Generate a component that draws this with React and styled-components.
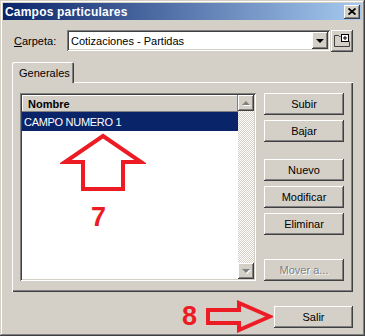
import React from "react";
import styled, { createGlobalStyle } from "styled-components";

const face = "#D4D0C8";
const font = `"Liberation Sans", Arial, sans-serif`;

const GlobalStyle = createGlobalStyle`
  html, body {
    margin: 0;
    padding: 0;
    background: ${face};
  }
  * {
    box-sizing: border-box;
  }
`;

const raised = `
  box-shadow: inset -1px -1px #404040, inset 1px 1px #ffffff,
    inset -2px -2px #808080, inset 2px 2px ${face};
`;

const sunken = `
  box-shadow: inset 1px 1px #808080, inset -1px -1px #ffffff,
    inset 2px 2px #404040, inset -2px -2px ${face};
`;

function App() {
  return (
    <>
      <GlobalStyle />
      <Window>
        <TitleBar>
          <Title>Campos particulares</Title>
          <CloseButton>
            <svg width="8" height="7" viewBox="0 0 8 7">
              <path d="M0.5 0.5 L7.5 6.5 M7.5 0.5 L0.5 6.5" stroke="#000" strokeWidth="1.8" />
            </svg>
          </CloseButton>
        </TitleBar>

        <Content>
          <FolderRow>
            <Label>
              <u>C</u>arpeta:
            </Label>
            <Combo>
              <ComboText>Cotizaciones - Partidas</ComboText>
              <DropButton>
                <DownTriangle />
              </DropButton>
            </Combo>
            <IconButton>
              <svg width="16" height="13" viewBox="0 0 16 13">
                <path d="M0.5 12.5 V1.5 H4.5 L5.5 2.5 H6.5" fill="none" stroke="#404040" />
                <path d="M0.5 12.5 H15.5 V7.5" fill="none" stroke="#404040" />
                <rect x="7.5" y="0.5" width="7" height="7" fill="#fff" stroke="#000" />
                <path d="M11 2 V6 M9 4 H13" stroke="#000" />
              </svg>
            </IconButton>
          </FolderRow>

          <TabStrip>
            <Tab>Generales</Tab>
          </TabStrip>

          <Panel>
            <ListBox>
              <ListMain>
                <Header>Nombre</Header>
                <Row selected>CAMPO NUMERO 1</Row>
              </ListMain>
              <ScrollBar>
                <ScrollButton>
                  <UpTriangle />
                </ScrollButton>
                <Track />
                <ScrollButton>
                  <DownGrayTriangle />
                </ScrollButton>
              </ScrollBar>

              <UpArrowMark width="86" height="62" viewBox="0 0 86 62">
                <polygon
                  points="43,4 81,30 63,30 63,57 23,57 23,30 5,30"
                  fill="none"
                  stroke="#ED1C24"
                  strokeWidth="4"
                />
              </UpArrowMark>
              <StepNumber>7</StepNumber>
            </ListBox>

            <ButtonColumn>
              <Button>Subir</Button>
              <Button>Bajar</Button>
              <Button gap={17}>Nuevo</Button>
              <Button>Modificar</Button>
              <Button>Eliminar</Button>
              <Button disabled last>
                Mover a...
              </Button>
            </ButtonColumn>
          </Panel>

          <Footer>
            <FooterNumber>8</FooterNumber>
            <svg width="70" height="33" viewBox="0 0 70 33">
              <polygon
                points="5,10 36,10 36,3 67,16.5 36,30 36,23 5,23"
                fill="none"
                stroke="#ED1C24"
                strokeWidth="4"
              />
            </svg>
            <ExitButton>Salir</ExitButton>
          </Footer>
        </Content>
      </Window>
    </>
  );
}

const Window = styled.div`
  width: 365px;
  height: 336px;
  padding: 3px;
  display: flex;
  flex-direction: column;
  background: ${face};
  box-shadow: inset -1px -1px #404040, inset 1px 1px ${face},
    inset -2px -2px #808080, inset 2px 2px #ffffff;
  font-family: ${font};
  font-size: 11px;
  color: #000;
`;

const TitleBar = styled.div`
  height: 18px;
  display: flex;
  align-items: center;
  justify-content: space-between;
  padding: 0 2px 0 2px;
  background: linear-gradient(to right, #0a246a, #a6caf0);
`;

const Title = styled.span`
  color: #fff;
  font-weight: bold;
  font-size: 12px;
  letter-spacing: 0.2px;
`;

const CloseButton = styled.div`
  width: 16px;
  height: 14px;
  display: flex;
  align-items: center;
  justify-content: center;
  background: ${face};
  ${raised}
`;

const Content = styled.div`
  flex: 1;
  display: flex;
  flex-direction: column;
  padding: 10px 9px 0 9px;
`;

const FolderRow = styled.div`
  display: flex;
  align-items: center;
  height: 21px;
`;

const Label = styled.span`
  width: 55px;
  padding-left: 2px;
  u {
    text-decoration: underline;
  }
`;

const Combo = styled.div`
  width: 263px;
  height: 21px;
  display: flex;
  align-items: center;
  justify-content: space-between;
  background: #fff;
  padding: 2px;
  ${sunken}
`;

const ComboText = styled.span`
  padding-left: 2px;
  font-size: 11px;
`;

const DropButton = styled.div`
  width: 16px;
  height: 17px;
  display: flex;
  align-items: center;
  justify-content: center;
  background: ${face};
  ${raised}
`;

const DownTriangle = styled.div`
  width: 0;
  height: 0;
  border-left: 4px solid transparent;
  border-right: 4px solid transparent;
  border-top: 4px solid #000;
`;

const IconButton = styled.div`
  width: 22px;
  height: 22px;
  margin-left: 1px;
  display: flex;
  align-items: center;
  justify-content: center;
  background: ${face};
  ${raised}
`;

const TabStrip = styled.div`
  display: flex;
  margin-top: 11px;
  position: relative;
  z-index: 1;
`;

const Tab = styled.div`
  width: 62px;
  height: 21px;
  margin-bottom: -1px;
  padding: 5px 0 0 7px;
  background: ${face};
  border-radius: 2px 2px 0 0;
  box-shadow: inset 1px 1px #ffffff, inset -1px 0 #404040, inset -2px 0 #808080;
`;

const Panel = styled.div`
  height: 210px;
  display: flex;
  gap: 8px;
  padding: 11px 9px 11px 8px;
  background: ${face};
  box-shadow: inset 1px 1px #ffffff, inset -1px -1px #404040,
    inset -2px -2px #808080;
`;

const ListBox = styled.div`
  position: relative;
  width: 236px;
  display: flex;
  padding: 2px;
  background: #fff;
  ${sunken}
`;

const ListMain = styled.div`
  flex: 1;
  display: flex;
  flex-direction: column;
`;

const Header = styled.div`
  height: 17px;
  display: flex;
  align-items: center;
  padding-left: 6px;
  font-weight: bold;
  font-size: 11px;
  background: ${face};
  box-shadow: inset -1px -1px #808080, inset 1px 1px #ffffff;
`;

const Row = styled.div`
  height: 19px;
  display: flex;
  align-items: center;
  padding-left: 2px;
  font-size: 11px;
  letter-spacing: -0.3px;
  background: ${({ selected }) => (selected ? "#0a246a" : "transparent")};
  color: ${({ selected }) => (selected ? "#fff" : "#000")};
`;

const ScrollBar = styled.div`
  width: 16px;
  display: flex;
  flex-direction: column;
`;

const ScrollButton = styled.div`
  width: 16px;
  height: 16px;
  display: flex;
  align-items: center;
  justify-content: center;
  background: ${face};
  ${raised}
`;

const UpTriangle = styled.div`
  width: 0;
  height: 0;
  border-left: 4px solid transparent;
  border-right: 4px solid transparent;
  border-bottom: 4px solid #808080;
  filter: drop-shadow(1px 1px 0 #ffffff);
`;

const DownGrayTriangle = styled(UpTriangle)`
  border-bottom: none;
  border-top: 4px solid #808080;
`;

const Track = styled.div`
  flex: 1;
  background: repeating-conic-gradient(#ffffff 0 25%, ${face} 0 50%) 0 0 / 2px
    2px;
`;

const UpArrowMark = styled.svg`
  position: absolute;
  left: 40px;
  top: 39px;
`;

const StepNumber = styled.span`
  position: absolute;
  left: 71px;
  top: 109px;
  color: #ed1c24;
  font-weight: bold;
  font-size: 27px;
  font-family: ${font};
`;

const ButtonColumn = styled.div`
  display: flex;
  flex-direction: column;
  width: 80px;
`;

const Button = styled.div`
  height: 22px;
  margin-top: ${({ gap }) => (gap ? gap : 5)}px;
  display: flex;
  align-items: center;
  justify-content: center;
  font-size: 11px;
  background: ${face};
  color: ${({ disabled }) => (disabled ? "#808080" : "#000")};
  text-shadow: ${({ disabled }) => (disabled ? "1px 1px 0 #ffffff" : "none")};
  ${raised}

  &:first-child {
    margin-top: 0;
  }

  ${({ last }) => last && "margin-top: auto;"}
`;

const Footer = styled.div`
  display: flex;
  align-items: center;
  justify-content: flex-end;
  margin-top: 8px;
  height: 33px;
`;

const FooterNumber = styled.span`
  color: #ed1c24;
  font-weight: bold;
  font-size: 27px;
  margin-right: 6px;
`;

const ExitButton = styled(Button)`
  width: 79px;
  margin-top: 0;
  margin-left: 1px;
`;

export default App;
